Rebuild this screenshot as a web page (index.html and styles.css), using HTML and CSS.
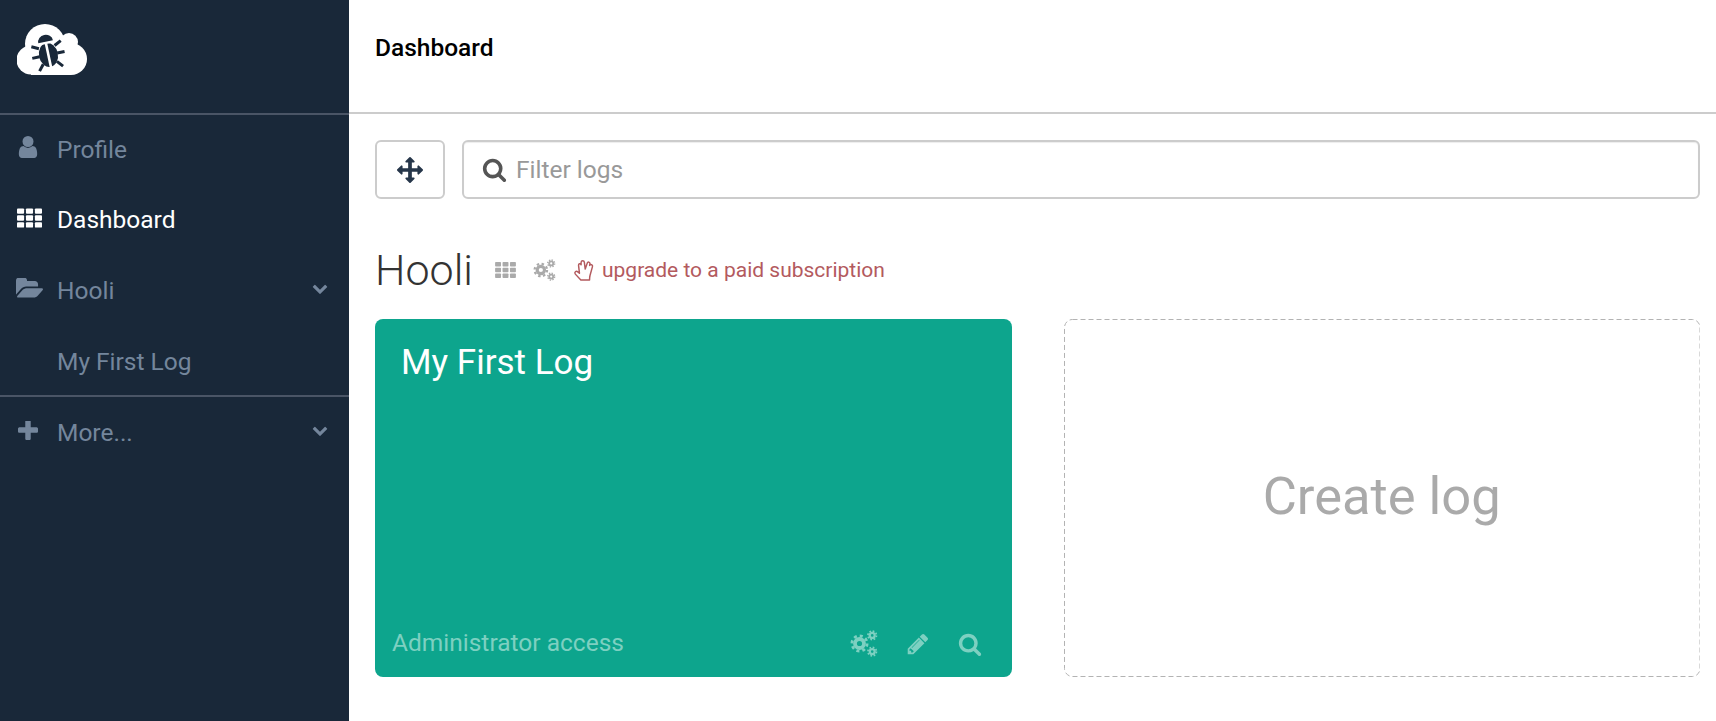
FILE: index.html
```html
<!DOCTYPE html>
<html lang="en">
<head>
  <meta charset="UTF-8">
  <title>Dashboard</title>
  <link rel="stylesheet" href="styles.css">
</head>
<body>
  <svg class="defs" width="0" height="0" aria-hidden="true">
    <symbol id="i-search" viewBox="0 0 1792 1792"><path d="M1216 832q0-185-131.500-316.500t-316.500-131.500-316.500 131.500-131.500 316.500 131.500 316.500 316.500 131.500 316.500-131.500 131.500-316.500zm512 832q0 52-38 90t-90 38q-54 0-90-38l-343-342q-179 124-399 124-143 0-273.500-55.500t-225-150-150-225-55.500-273.500 55.500-273.500 150-225 225-150 273.500-55.500 273.500 55.500 225 150 150 225 55.500 273.500q0 220-124 399l343 343q37 37 37 90z"/></symbol>
    <symbol id="i-chevron" viewBox="0 0 1792 1792"><path d="M1683 808l-742 741q-19 19-45 19t-45-19l-742-741q-19-19-19-45.500t19-45.500l166-165q19-19 45-19t45 19l531 531 531-531q19-19 45-19t45 19l166 165q19 19 19 45.500t-19 45.500z"/></symbol>
    <symbol id="i-th" viewBox="0 0 26 20">
      <rect x="0" y="0" width="7.400" height="5.600" rx="1"/><rect x="9.300" y="0" width="7.400" height="5.600" rx="1"/><rect x="18.600" y="0" width="7.400" height="5.600" rx="1"/>
      <rect x="0" y="7.200" width="7.400" height="5.600" rx="1"/><rect x="9.300" y="7.200" width="7.400" height="5.600" rx="1"/><rect x="18.600" y="7.200" width="7.400" height="5.600" rx="1"/>
      <rect x="0" y="14.400" width="7.400" height="5.600" rx="1"/><rect x="9.300" y="14.400" width="7.400" height="5.600" rx="1"/><rect x="18.600" y="14.400" width="7.400" height="5.600" rx="1"/>
    </symbol>
    <symbol id="i-cogs" viewBox="0 0 24 24">
      <g fill="none" stroke="currentColor">
        <circle cx="8" cy="12" r="4" stroke-width="3.400"/>
        <circle cx="8" cy="12" r="6.800" stroke-width="2.400" stroke-dasharray="2.700 2.640"/>
        <circle cx="19.300" cy="4.800" r="2.200" stroke-width="2"/>
        <circle cx="19.300" cy="4.800" r="3.800" stroke-width="1.500" stroke-dasharray="1.500 1.480"/>
        <circle cx="19.300" cy="19.200" r="2.200" stroke-width="2"/>
        <circle cx="19.300" cy="19.200" r="3.800" stroke-width="1.500" stroke-dasharray="1.500 1.480"/>
      </g>
    </symbol>
  </svg>

  <div class="app">
    <aside class="sidebar">
      <div class="logo-wrap">
        <svg class="logo" viewBox="0 0 70 51">
          <g fill="#fff">
            <circle cx="28" cy="20" r="20"/>
            <circle cx="52" cy="18" r="9"/>
            <circle cx="14" cy="36" r="14.500"/>
            <circle cx="54" cy="35" r="16"/>
            <rect x="14" y="25" width="40" height="26"/>
          </g>
          <g transform="rotate(-12 31 29)" stroke="#192839" fill="none" stroke-width="3">
            <ellipse cx="31" cy="31" rx="9.500" ry="12" fill="#192839" stroke="none"/>
            <path d="M23.500 17.500a7.500 7 0 0 1 15 0z" fill="#192839" stroke="none"/>
            <path d="M23 23l-7-3.500M39 23l7-3.500M22 31h-7.500M40 31h7.500M24 39l-5 6M38 39l5 6"/>
            <path d="M31 19v25" stroke="#fff" stroke-width="2.600"/>
            <path d="M21 19h20" stroke="#fff" stroke-width="1.600"/>
          </g>
        </svg>
      </div>
      <nav class="nav-group">
        <a class="nav-item nav-profile">
          <span class="nav-icon"><svg class="ico-user" viewBox="256 128 1280 1536"><path d="M1536 1399q0 109-62.500 187t-150.500 78h-854q-88 0-150.500-78t-62.500-187q0-85 8.500-160.500t31.500-152 58.500-131 94-89 134.500-34.500q131 128 313 128t313-128q76 0 134.500 34.500t94 89 58.500 131 31.500 152 8.500 160.500zm-256-887q0 159-112.500 271.500t-271.500 112.500-271.500-112.500-112.500-271.500 112.500-271.500 271.500-112.500 271.500 112.500 112.500 271.500z"/></svg></span>
          Profile
        </a>
        <a class="nav-item nav-dash active">
          <span class="nav-icon"><svg class="ico-th"><use href="#i-th"/></svg></span>
          Dashboard
        </a>
        <a class="nav-item">
          <span class="nav-icon"><svg class="ico-folder" viewBox="0 190 1880 1360"><path d="M1879 952q0 31-31 66l-336 396q-43 51-120.500 86.500t-143.500 35.500h-1088q-34 0-60.500-13t-26.500-43q0-31 31-66l336-396q43-51 120.500-86.500t143.500-35.500h1088q34 0 60.500 13t26.500 43zm-343-344v160h-832q-94 0-197 47.500t-164 119.500l-337 396-5 6q0-4-.500-12.500t-.500-12.500v-960q0-92 66-158t158-66h320q92 0 158 66t66 158v32h544q92 0 158 66t66 158z"/></svg></span>
          Hooli
          <svg class="chevron"><use href="#i-chevron"/></svg>
        </a>
        <a class="nav-item nav-sub">
          <span class="nav-icon"></span>
          My First Log
        </a>
      </nav>
      <nav class="nav-group">
        <a class="nav-item">
          <span class="nav-icon"><svg class="ico-plus" viewBox="192 192 1408 1408"><path d="M1600 736v192q0 40-28 68t-68 28h-416v416q0 40-28 68t-68 28h-192q-40 0-68-28t-28-68v-416h-416q-40 0-68-28t-28-68v-192q0-40 28-68t68-28h416v-416q0-40 28-68t68-28h192q40 0 68 28t28 68v416h416q40 0 68 28t28 68z"/></svg></span>
          More...
          <svg class="chevron"><use href="#i-chevron"/></svg>
        </a>
      </nav>
    </aside>

    <main class="main">
      <header class="topbar">Dashboard</header>
      <div class="content">
        <div class="toolbar">
          <button class="move-btn" type="button">
            <svg viewBox="0 0 1792 1792"><path d="M1792 896q0 26-19 45l-256 256q-19 19-45 19t-45-19-19-45v-128h-384v384h128q26 0 45 19t19 45-19 45l-256 256q-19 19-45 19t-45-19l-256-256q-19-19-19-45t19-45 45-19h128v-384h-384v128q0 26-19 45t-45 19-45-19l-256-256q-19-19-19-45t19-45l256-256q19-19 45-19t45 19 19 45v128h384v-384h-128q-26 0-45-19t-19-45 19-45l256-256q19-19 45-19t45 19l256 256q19 19 19 45t-19 45-45 19h-128v384h384v-128q0-26 19-45t45-19 45 19l256 256q19 19 19 45z"/></svg>
          </button>
          <label class="filter">
            <svg class="filter-icon"><use href="#i-search"/></svg>
            <input type="text" placeholder="Filter logs">
          </label>
        </div>

        <div class="group-head">
          <h1>Hooli</h1>
          <svg class="group-th"><use href="#i-th"/></svg>
          <svg class="group-cogs"><use href="#i-cogs"/></svg>
          <a class="upgrade">
            <svg class="spock" viewBox="0 0 24 24"><path d="M8 23L2 16.500C.5 14.500 2.800 12.500 4.700 14L6.500 15.500L5.500 7C5.300 5 7.800 4.500 8.300 6.300L8.300 3.500C8.500 1.300 11.500 1.300 11.800 3.500L12.800 11L15 4.500C15.700 2.600 18.200 3.300 17.900 5.300L17.600 7C18.300 5.500 21.300 6 20.700 8.300L18 18C17.500 20 17.500 21 17.500 23Z"/></svg>
            upgrade to a paid subscription
          </a>
        </div>

        <div class="cards">
          <section class="log-card">
            <h2>My First Log</h2>
            <div class="log-foot">
              <span class="access">Administrator access</span>
              <span class="log-actions">
                <svg class="act-cogs"><use href="#i-cogs"/></svg>
                <svg class="act-pencil" viewBox="0 0 1792 1792"><path d="M491 1536l91-91-235-235-91 91v107h128v128h107zm523-928q0-22-22-22-10 0-17 7l-542 542q-7 7-7 17 0 22 22 22 10 0 17-7l542-542q7-7 7-17zm-54-192l416 416-832 832h-416v-416zm683 96q0 53-37 90l-166 166-416-416 166-165q36-38 90-38 53 0 91 38l235 234q37 39 37 91z"/></svg>
                <svg class="act-search"><use href="#i-search"/></svg>
              </span>
            </div>
          </section>
          <a class="create-card">
            <svg class="dashes"><rect class="dash-rect" x="0.500" y="0.500" rx="8"/></svg>
            Create log
          </a>
        </div>
      </div>
    </main>
  </div>
</body>
</html>
```
FILE: styles.css
```css
* { box-sizing: border-box; }
html, body { height: 100%; }
body {
  margin: 0;
  font-family: Roboto, "Liberation Sans", Arial, sans-serif;
  font-size: 24.500px;
  color: #333;
  background: #fff;
}
svg { fill: currentColor; display: block; }
.defs { position: absolute; }

.app { display: flex; min-height: 100%; }

/* sidebar */
.sidebar {
  width: 349px;
  flex: none;
  background: #192839;
  color: #74869c;
}
.logo-wrap {
  height: 115px;
  padding: 24px 0 0 17px;
  border-bottom: 2px solid #4a5566;
}
.logo { width: 70px; height: 51px; }
.nav-group { border-bottom: 2px solid #4a5566; }
.nav-group:last-child { border-bottom: 0; }
.nav-item {
  display: flex;
  align-items: center;
  height: 70px;
  padding: 0 21px 0 0;
}
.nav-profile { padding-bottom: 2px; }
.nav-dash { padding-bottom: 1px; }
.nav-sub { padding-top: 2px; }
.nav-item.active { color: #fff; }
.nav-icon {
  width: 57px;
  flex: none;
  display: flex;
  padding-left: 17px;
}
.ico-user { width: 20px; height: 22px; margin: -4px 0 0 1px; }
.ico-th { width: 25px; height: 20px; margin-top: -4px; }
.ico-folder { width: 27px; height: 20px; margin-top: -5px; margin-left: -1px; }
.ico-plus { width: 20px; height: 20px; margin: -2px 0 0 1px; }
.chevron { width: 16px; height: 16px; margin-left: auto; margin-top: -5px; }

/* main column */
.main { flex: 1; min-width: 0; }
.topbar {
  height: 114px;
  padding: 33px 0 0 26px;
  border-bottom: 2px solid #ccc;
  color: #000;
  font-size: 24.500px;
  font-weight: 500;
  line-height: 30px;
}
.content { padding: 26px 16px 0 26px; }

.toolbar { display: flex; gap: 17px; }
.move-btn {
  width: 70px;
  height: 59px;
  flex: none;
  display: flex;
  align-items: center;
  justify-content: center;
  padding: 0;
  background: #fff;
  border: 2px solid #ccc;
  border-radius: 6px;
  color: #26364a;
}
.move-btn svg { width: 26px; height: 26px; }
.filter {
  flex: 1;
  display: flex;
  align-items: center;
  height: 59px;
  padding-left: 18px;
  border: 2px solid #ccc;
  border-radius: 6px;
  box-shadow: inset 0 1px 1px rgba(0, 0, 0, .075);
}
.filter-icon { width: 25px; height: 25px; color: #555; flex: none; }
.filter input {
  flex: 1;
  min-width: 0;
  margin-left: 9px;
  padding: 0;
  border: 0;
  outline: 0;
  background: none;
  font: inherit;
  color: #555;
}
.filter input::placeholder { color: #999; opacity: 1; }

.group-head {
  display: flex;
  align-items: center;
  height: 50px;
  margin-top: 46px;
}
.group-head h1 {
  margin: 0 22px 0 0;
  font-size: 43px;
  font-weight: 300;
  line-height: 50px;
}
.group-th { width: 21px; height: 16px; color: #aaa; margin-right: 17px; }
.group-cogs { width: 23px; height: 22px; color: #aaa; margin-right: 17px; }
.upgrade {
  display: flex;
  align-items: center;
  gap: 6px;
  color: #b35a5e;
  font-size: 21px;
}
.spock {
  width: 23px;
  height: 22px;
  fill: none;
  stroke: currentColor;
  stroke-width: 1.600;
  stroke-linejoin: round;
}

.cards {
  display: grid;
  grid-template-columns: 1fr 1fr;
  gap: 52px;
  margin-top: 24px;
}
.log-card {
  height: 358px;
  display: flex;
  flex-direction: column;
  justify-content: space-between;
  padding: 24px 30px 20px 17px;
  background: #0da58d;
  border-radius: 8px;
  color: #fff;
}
.log-card h2 {
  margin: 0 0 0 9px;
  font-size: 35px;
  font-weight: 400;
  line-height: 40px;
}
.log-foot { display: flex; align-items: center; justify-content: space-between; color: #7dd0c1; }
.access { font-weight: 400; font-size: 24.500px; }
.log-actions { display: flex; align-items: center; gap: 28px; margin-top: 3px; }
.act-cogs { width: 28px; height: 27px; }
.act-pencil { width: 24px; height: 24px; }
.act-search { width: 24px; height: 24px; }

.create-card {
  position: relative;
  height: 358px;
  display: flex;
  align-items: center;
  justify-content: center;
  padding-bottom: 4px;
  color: #aaa;
  font-size: 52.500px;
  font-weight: 400;
}
.dashes { position: absolute; inset: 0; width: 100%; height: 100%; }
.dash-rect {
  width: calc(100% - 1px);
  height: calc(100% - 1px);
  fill: none;
  stroke: #b3b3b3;
  stroke-width: 1;
  stroke-dasharray: 5 3;
}
```
